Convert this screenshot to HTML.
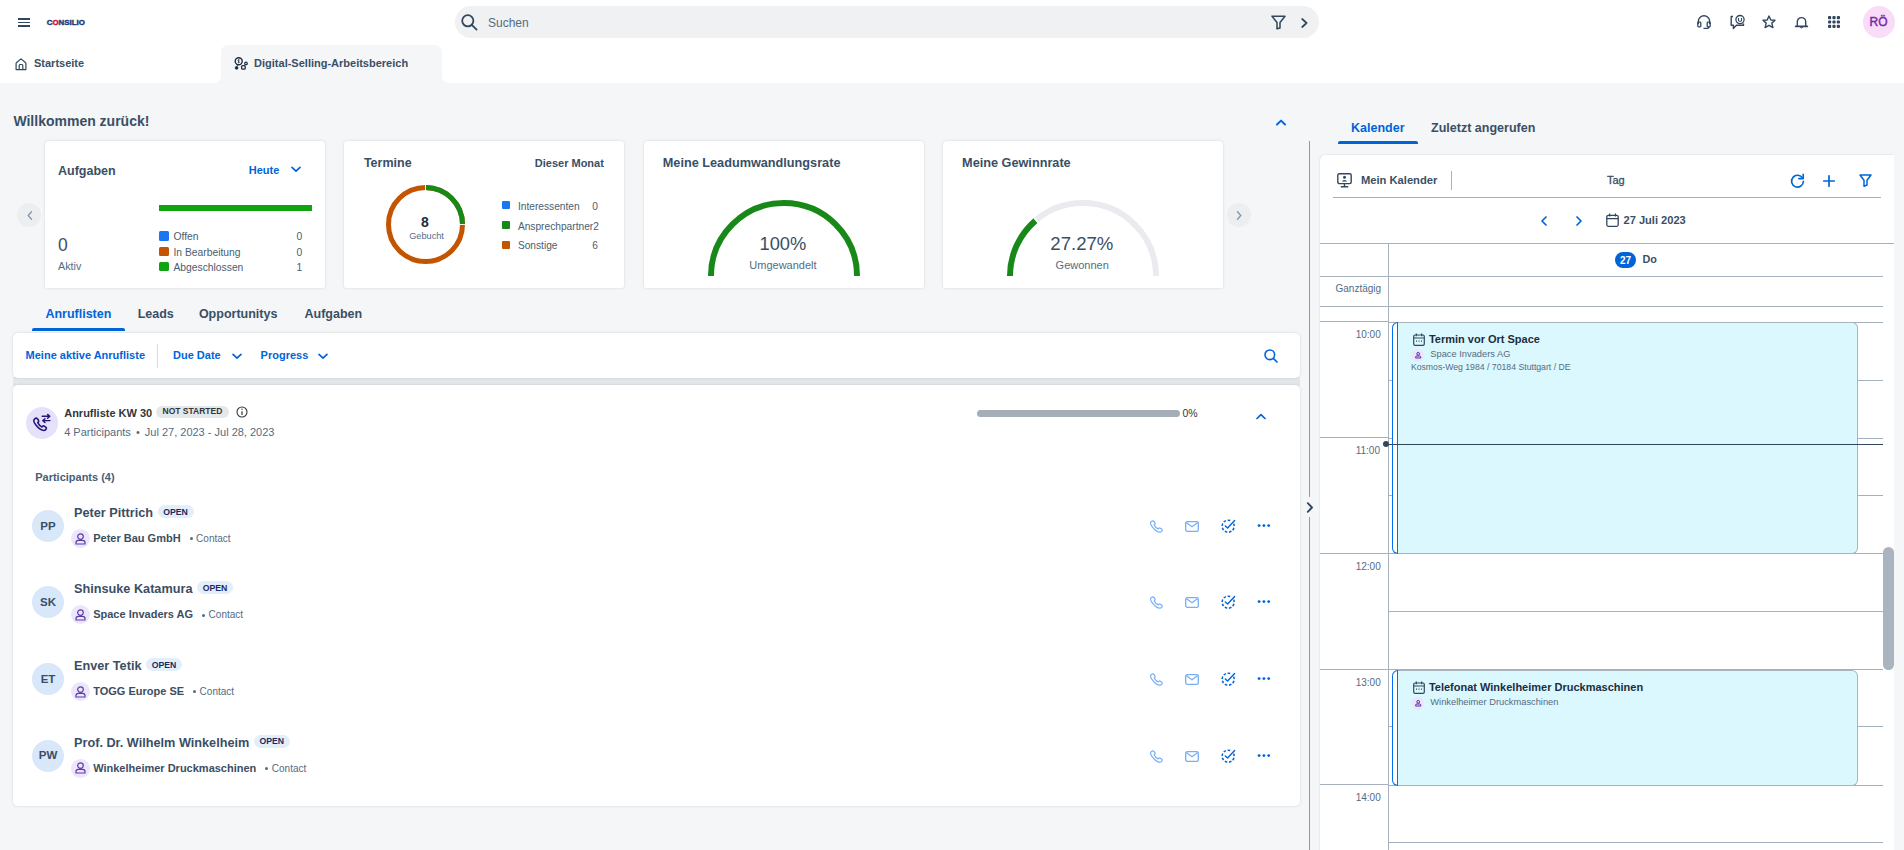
<!DOCTYPE html>
<html><head><meta charset="utf-8">
<style>
*{box-sizing:border-box;margin:0;padding:0}
html,body{width:1904px;height:850px;overflow:hidden;background:#f5f6f7;font-family:"Liberation Sans",sans-serif;color:#1d2d3e}
.a{position:absolute}
.t{position:absolute;line-height:1;white-space:nowrap}
.card{position:absolute;background:#fff;border-radius:4px 4px 2px 2px;box-shadow:0 0 3px rgba(34,53,72,.16)}
svg{position:absolute;overflow:visible}
</style></head><body>
<div class="a" style="left:0px;top:0px;width:1904px;height:83px;background:#fff;"></div>
<div class="a" style="left:18px;top:18px;width:12px;height:1.5px;background:#32475e;"></div>
<div class="a" style="left:18px;top:21.5px;width:12px;height:1.5px;background:#32475e;"></div>
<div class="a" style="left:18px;top:25px;width:12px;height:1.5px;background:#32475e;"></div>
<svg style="left:46px;top:18px" width="40" height="8" viewBox="0 0 40 8"><text x="0.8" y="6.8" font-family="Liberation Sans" font-weight="bold" font-size="7.6" textLength="38" lengthAdjust="spacingAndGlyphs" fill="#1f3d73" stroke="#1f3d73" stroke-width="0.45">C<tspan fill="#d0103a" stroke="#d0103a">O</tspan>NSILIO</text></svg>
<div class="a" style="left:455px;top:6px;width:864px;height:32px;background:#eff1f2;border-radius:16px"></div>
<svg style="left:461px;top:14px" width="17" height="17" viewBox="0 0 17 17"><circle cx="6.8" cy="6.8" r="5.6" fill="none" stroke="#32475e" stroke-width="1.8"/><path d="M10.8 10.8 L15.6 15.6" stroke="#32475e" stroke-width="1.8" stroke-linecap="round"/></svg>
<div class="t" style="left:488.0px;top:17px;font-size:12px;color:#556b82;">Suchen</div>
<svg style="left:1271px;top:15px" width="15" height="15" viewBox="0 0 15 15"><path d="M1 1.2 H14 L9 7.5 V13 L6 13.8 V7.5 Z" fill="none" stroke="#32475e" stroke-width="1.5" stroke-linejoin="round"/></svg>
<svg style="left:1301px;top:17.5px" width="7" height="10" viewBox="0 0 7 10"><path d="M1.2 1 L5.6 5 L1.2 9" fill="none" stroke="#32475e" stroke-width="1.7" stroke-linecap="round" stroke-linejoin="round"/></svg>
<svg style="left:1697px;top:15px" width="14" height="14" viewBox="0 0 14 14"><path d="M1.3 9 V6.5 A5.7 5.7 0 0 1 12.7 6.5 V9" fill="none" stroke="#32475e" stroke-width="1.4"/><rect x="0.8" y="7.2" width="3" height="4.6" rx="0.8" fill="none" stroke="#32475e" stroke-width="1.3"/><rect x="10.2" y="7.2" width="3" height="4.6" rx="0.8" fill="none" stroke="#32475e" stroke-width="1.3"/><path d="M12 11.5 Q12 13.4 9.5 13.4 H6.5" fill="none" stroke="#32475e" stroke-width="1.4"/></svg>
<svg style="left:1730px;top:14.5px" width="15" height="15" viewBox="0 0 15 15"><path d="M3 1.5 H1.2 V10.2 H3.5 L3.3 13.5 L6.5 10.2 H13.5 V8.6" fill="none" stroke="#32475e" stroke-width="1.4" stroke-linejoin="round"/><circle cx="10" cy="4.6" r="4.1" fill="none" stroke="#32475e" stroke-width="1.3"/><path d="M8.5 3 V5.2 Q8.5 6.3 10 6.3 Q11.5 6.3 11.5 5.2 V3" fill="none" stroke="#32475e" stroke-width="1.1"/></svg>
<svg style="left:1762px;top:15px" width="14" height="14" viewBox="0 0 14 14"><path d="M7 1 L8.8 5 L13 5.3 L9.8 8.1 L10.9 12.6 L7 10.3 L3.1 12.6 L4.2 8.1 L1 5.3 L5.2 5 Z" fill="none" stroke="#32475e" stroke-width="1.4" stroke-linejoin="round"/></svg>
<svg style="left:1795px;top:15.5px" width="13" height="13" viewBox="0 0 13 13"><path d="M2.3 10.3 V5.8 A4.2 4.2 0 0 1 10.7 5.8 V10.3" fill="none" stroke="#32475e" stroke-width="1.4"/><path d="M0.6 10.4 H12.4" stroke="#32475e" stroke-width="1.6" stroke-linecap="round"/><path d="M5.3 11.4 Q6.5 12.6 7.7 11.4" fill="#32475e" stroke="#32475e" stroke-width="1"/></svg>
<svg style="left:1828px;top:16px" width="12" height="12" viewBox="0 0 12 12"><g fill="#32475e"><rect x="0" y="0" width="3.2" height="3.2" rx="1"/><rect x="4.4" y="0" width="3.2" height="3.2" rx="1"/><rect x="8.8" y="0" width="3.2" height="3.2" rx="1"/><rect x="0" y="4.4" width="3.2" height="3.2" rx="1"/><rect x="4.4" y="4.4" width="3.2" height="3.2" rx="1"/><rect x="8.8" y="4.4" width="3.2" height="3.2" rx="1"/><rect x="0" y="8.8" width="3.2" height="3.2" rx="1"/><rect x="4.4" y="8.8" width="3.2" height="3.2" rx="1"/><rect x="8.8" y="8.8" width="3.2" height="3.2" rx="1"/></g></svg>
<div class="a" style="left:1863px;top:6px;width:32px;height:32px;background:#f8dcf8;border-radius:50%"></div>
<div class="t" style="left:1869.5px;top:16px;font-size:12px;color:#7a2aa8;-webkit-text-stroke:0.45px #7a2aa8;">RÖ</div>
<svg style="left:14.5px;top:57.5px" width="12" height="13" viewBox="0 0 12 13"><path d="M1.1 11.6 V5.5 Q1.1 4.9 1.6 4.5 L6 0.9 L10.4 4.5 Q10.9 4.9 10.9 5.5 V11.6 Z" fill="none" stroke="#32475e" stroke-width="1.2" stroke-linejoin="round"/><path d="M4.2 11.6 V7.4 Q4.2 6.5 5 6.5 H7 Q7.8 6.5 7.8 7.4 V11.6" fill="none" stroke="#32475e" stroke-width="1.2"/></svg>
<div class="t" style="left:34.0px;top:58px;font-size:11px;color:#3a4f65;font-weight:bold;">Startseite</div>
<div class="a" style="left:221px;top:45px;width:221px;height:38px;background:#f5f6f7;border-radius:7px 7px 0 0"></div>
<svg style="left:213px;top:75px" width="8" height="8" viewBox="0 0 8 8"><path d="M0 8 Q8 8 8 0 V8 Z" fill="#f5f6f7"/></svg>
<svg style="left:442px;top:75px" width="8" height="8" viewBox="0 0 8 8"><path d="M8 8 Q0 8 0 0 V8 Z" fill="#f5f6f7"/></svg>
<svg style="left:232px;top:55px" width="16" height="16" viewBox="0 0 16 16"><circle cx="6.7" cy="6.2" r="3.5" fill="none" stroke="#1d2d3e" stroke-width="1.4"/><path d="M6.7 4.3 V8.1 M7.6 5 Q6 4.4 6 5.6 Q6 6.3 7 6.5 Q7.6 6.8 7.2 7.6 Q6.6 8 5.8 7.6" fill="none" stroke="#1d2d3e" stroke-width="0.7"/><circle cx="4.6" cy="12.9" r="1.4" fill="#1d2d3e" stroke="#1d2d3e" stroke-width="0.8"/><path d="M4.9 11.5 L5.8 9.6" stroke="#1d2d3e" stroke-width="0.8"/><rect x="9.6" y="10.6" width="3.6" height="3.6" rx="1" fill="none" stroke="#1d2d3e" stroke-width="1.3"/><circle cx="14" cy="8.4" r="1.3" fill="none" stroke="#1d2d3e" stroke-width="1.2"/><path d="M12.6 10.6 L13.3 9.5" stroke="#1d2d3e" stroke-width="0.9"/></svg>
<div class="t" style="left:254.1px;top:58px;font-size:11px;color:#3a4f65;font-weight:bold;">Digital-Selling-Arbeitsbereich</div>
<div class="t" style="left:13.4px;top:114px;font-size:14px;color:#3a4f65;font-weight:bold;">Willkommen zurück!</div>
<svg style="left:1275.5px;top:118.5px" width="10" height="7" viewBox="0 0 10 7"><path d="M1 5.5 L5 1.6 L9 5.5" fill="none" stroke="#0064d9" stroke-width="1.9" stroke-linecap="round" stroke-linejoin="round"/></svg>
<div class="a" style="left:16.8px;top:202.7px;width:24px;height:24px;background:#eceef0;border-radius:50%"></div>
<svg style="left:26.5px;top:210.7px" width="6" height="9" viewBox="0 0 6 9"><path d="M4.5 0.8 L1.2 4.5 L4.5 8.2" fill="none" stroke="#8396a8" stroke-width="1.3" stroke-linecap="round"/></svg>
<div class="a" style="left:1226.8px;top:203px;width:24px;height:24px;background:#eceef0;border-radius:50%"></div>
<svg style="left:1236px;top:211px" width="6" height="9" viewBox="0 0 6 9"><path d="M1.5 0.8 L4.8 4.5 L1.5 8.2" fill="none" stroke="#8396a8" stroke-width="1.3" stroke-linecap="round"/></svg>
<div class="card" style="left:45px;top:141px;width:280px;height:146.5px"></div>
<div class="t" style="left:58.0px;top:165px;font-size:12.5px;color:#3a4f65;font-weight:bold;">Aufgaben</div>
<div class="t" style="left:248.7px;top:165px;font-size:11px;color:#0064d9;font-weight:bold;">Heute</div>
<svg style="left:290.5px;top:166px" width="10" height="7" viewBox="0 0 10 7"><path d="M1 1.3 L5 5.2 L9 1.3" fill="none" stroke="#0064d9" stroke-width="1.7" stroke-linecap="round" stroke-linejoin="round"/></svg>
<div class="a" style="left:159px;top:204.6px;width:153px;height:6.3px;background:#0fa30f;"></div>
<div class="a" style="left:159px;top:231.4px;width:10px;height:9.3px;background:#1b76f2;border-radius:1.5px"></div>
<div class="t" style="left:173.5px;top:232px;font-size:10.3px;color:#4a5d70;">Offen</div>
<div class="t" style="left:296.4px;top:232px;font-size:10.3px;color:#4a5d70;">0</div>
<div class="a" style="left:159px;top:246.7px;width:10px;height:9.3px;background:#c35500;border-radius:1.5px"></div>
<div class="t" style="left:173.5px;top:248px;font-size:10.3px;color:#4a5d70;">In Bearbeitung</div>
<div class="t" style="left:296.4px;top:248px;font-size:10.3px;color:#4a5d70;">0</div>
<div class="a" style="left:159px;top:262.0px;width:10px;height:9.3px;background:#0fa30f;border-radius:1.5px"></div>
<div class="t" style="left:173.5px;top:263px;font-size:10.3px;color:#4a5d70;">Abgeschlossen</div>
<div class="t" style="left:296.4px;top:263px;font-size:10.3px;color:#4a5d70;">1</div>
<div class="t" style="left:58.0px;top:237px;font-size:17.5px;color:#3a4f65;">0</div>
<div class="t" style="left:58.0px;top:261px;font-size:10.75px;color:#556b82;">Aktiv</div>
<div class="card" style="left:344px;top:141px;width:280px;height:146.5px"></div>
<div class="t" style="left:363.9px;top:157px;font-size:12.5px;color:#3a4f65;font-weight:bold;">Termine</div>
<div class="t" style="left:534.8px;top:158px;font-size:11px;color:#3a4f65;font-weight:bold;">Dieser Monat</div>
<svg style="left:386px;top:185px" width="79" height="79" viewBox="0 0 79 79"><circle cx="39.5" cy="39.5" r="37" fill="none" stroke="#c35500" stroke-width="5"/><path d="M39.5 2.5 A37 37 0 0 1 76.5 39.5" fill="none" stroke="#188918" stroke-width="5"/><path d="M39.5 0 V5 M74 39.5 H79" stroke="#fff" stroke-width="0.9"/></svg>
<div class="t" style="left:405px;top:215px;font-size:14px;color:#1d2d3e;font-weight:bold;width:40px;text-align:center;">8</div>
<div class="t" style="left:409.2px;top:232px;font-size:9.2px;color:#556b82;">Gebucht</div>
<div class="a" style="left:502px;top:201.4px;width:8px;height:7.6px;background:#1b76f2;border-radius:1px"></div>
<div class="t" style="left:517.9px;top:202px;font-size:10.2px;color:#4a5d70;">Interessenten</div>
<div class="t" style="left:592.3px;top:202px;font-size:10.2px;color:#4a5d70;">0</div>
<div class="a" style="left:502px;top:221.3px;width:8px;height:7.6px;background:#188918;border-radius:1px"></div>
<div class="t" style="left:517.9px;top:222px;font-size:10.2px;color:#4a5d70;">Ansprechpartner2</div>
<div class="a" style="left:502px;top:241.2px;width:8px;height:7.6px;background:#c35500;border-radius:1px"></div>
<div class="t" style="left:517.9px;top:241px;font-size:10.2px;color:#4a5d70;">Sonstige</div>
<div class="t" style="left:592.3px;top:241px;font-size:10.2px;color:#4a5d70;">6</div>
<div class="card" style="left:644px;top:141px;width:280px;height:146.5px"></div>
<div class="t" style="left:662.8px;top:157px;font-size:12.7px;color:#3a4f65;font-weight:bold;">Meine Leadumwandlungsrate</div>
<svg style="left:704px;top:196px" width="160" height="81" viewBox="0 0 160 81"><path d="M7 80 A73 73 0 0 1 153 80" fill="none" stroke="#188918" stroke-width="6"/></svg>
<div class="t" style="left:759.5px;top:235px;font-size:18.3px;color:#3a4f65;">100%</div>
<div class="t" style="left:749.3px;top:260px;font-size:11px;color:#556b82;">Umgewandelt</div>
<div class="card" style="left:943px;top:141px;width:280px;height:146.5px"></div>
<div class="t" style="left:962.1px;top:157px;font-size:12.7px;color:#3a4f65;font-weight:bold;">Meine Gewinnrate</div>
<svg style="left:1003px;top:196px" width="160" height="81" viewBox="0 0 160 81"><path d="M7 80 A73 73 0 0 1 153 80" fill="none" stroke="#e9ebee" stroke-width="6"/><path d="M7 80 A73 73 0 0 1 32.5 24.6" fill="none" stroke="#188918" stroke-width="6"/><path d="M35.6 27.1 L30.5 21.0" stroke="#fff" stroke-width="1.6"/></svg>
<div class="t" style="left:1050.3px;top:235px;font-size:18.6px;color:#3a4f65;">27.27%</div>
<div class="t" style="left:1055.6px;top:260px;font-size:11px;color:#556b82;">Gewonnen</div>
<div class="t" style="left:45.4px;top:308px;font-size:12.5px;color:#0064d9;font-weight:bold;">Anruflisten</div>
<div class="t" style="left:137.7px;top:308px;font-size:12.5px;color:#3a4f65;font-weight:bold;">Leads</div>
<div class="t" style="left:198.9px;top:308px;font-size:12.5px;color:#3a4f65;font-weight:bold;">Opportunitys</div>
<div class="t" style="left:304.5px;top:308px;font-size:12.5px;color:#3a4f65;font-weight:bold;">Aufgaben</div>
<div class="a" style="left:32px;top:327.5px;width:93px;height:3px;background:#0064d9;border-radius:2px 2px 0 0"></div>
<div class="a" style="left:13px;top:377px;width:1287px;height:9px;background:#e4e7ea;"></div>
<div class="card" style="left:13px;top:333px;width:1287px;height:45px;border-radius:5px"></div>
<div class="t" style="left:25.6px;top:350px;font-size:11px;color:#0064d9;font-weight:bold;">Meine aktive Anrufliste</div>
<div class="a" style="left:157px;top:344px;width:1px;height:24px;background:#d9dde2;"></div>
<div class="t" style="left:173.0px;top:350px;font-size:11px;color:#0064d9;font-weight:bold;">Due Date</div>
<svg style="left:231.5px;top:352.5px" width="10" height="7" viewBox="0 0 10 7"><path d="M1 1.3 L5 5.2 L9 1.3" fill="none" stroke="#0064d9" stroke-width="1.7" stroke-linecap="round" stroke-linejoin="round"/></svg>
<div class="t" style="left:260.6px;top:350px;font-size:11px;color:#0064d9;font-weight:bold;">Progress</div>
<svg style="left:317.5px;top:352.5px" width="10" height="7" viewBox="0 0 10 7"><path d="M1 1.3 L5 5.2 L9 1.3" fill="none" stroke="#0064d9" stroke-width="1.7" stroke-linecap="round" stroke-linejoin="round"/></svg>
<svg style="left:1264px;top:349px" width="14" height="14" viewBox="0 0 14 14"><circle cx="5.8" cy="5.8" r="4.8" fill="none" stroke="#0064d9" stroke-width="1.6"/><path d="M9.3 9.3 L13 13" stroke="#0064d9" stroke-width="1.7" stroke-linecap="round"/></svg>
<div class="card" style="left:13px;top:385px;width:1287px;height:421px;border-radius:5px"></div>
<div class="a" style="left:26px;top:407px;width:32px;height:32px;background:#e6e1fb;border-radius:50%"></div>
<svg style="left:32px;top:413px" width="20" height="20" viewBox="0 0 20 20"><g transform="translate(1.2 4.3) scale(1.08)"><path d="M3.2 0.9 C2.6 0.7 2.0 0.9 1.6 1.3 L1.0 1.9 C0.3 2.6 0.5 4.6 2.5 7.2 C4.5 9.8 7.5 12.2 9.9 12.2 C10.6 12.2 11.2 11.9 11.6 11.4 L12.0 10.9 C12.4 10.4 12.3 9.7 11.8 9.3 L10.3 8.2 C9.8 7.9 9.2 7.9 8.8 8.3 L8.2 8.9 C6.9 8.3 4.8 6.2 4.2 4.9 L4.8 4.3 C5.2 3.9 5.2 3.3 4.9 2.8 L3.9 1.4 Z" fill="none" stroke="#25167a" stroke-width="1.5" stroke-linejoin="round"/></g><path d="M10.2 3.3 H17.6 M15.6 1.4 L17.8 3.3 L15.6 5.2 M18 7.6 H11 M13 5.7 L10.8 7.6 L13 9.5" fill="none" stroke="#25167a" stroke-width="1.4" stroke-linecap="round" stroke-linejoin="round"/></svg>
<div class="t" style="left:64.2px;top:408px;font-size:11px;color:#32363a;font-weight:bold;">Anrufliste KW 30</div>
<div class="a" style="left:156.3px;top:406px;width:72.4px;height:12px;background:#e5e8eb;border-radius:6px"></div>
<div class="t" style="left:162.5px;top:407px;font-size:8.5px;color:#32363a;font-weight:bold;">NOT STARTED</div>
<svg style="left:235.5px;top:406px" width="12" height="12" viewBox="0 0 12 12"><circle cx="6" cy="6" r="5" fill="none" stroke="#32363a" stroke-width="1.1"/><path d="M6 5.2 V9" stroke="#32363a" stroke-width="1.2"/><circle cx="6" cy="3.3" r="0.7" fill="#32363a"/></svg>
<div class="t" style="left:64.2px;top:427px;font-size:11px;color:#556b82;">4 Participants <span style="margin:0 2px">•</span> Jul 27, 2023 - Jul 28, 2023</div>
<div class="a" style="left:977px;top:410px;width:203px;height:7px;background:#a5aeb7;border-radius:3.5px"></div>
<div class="t" style="left:1182.5px;top:408px;font-size:10.5px;color:#32363a;">0%</div>
<svg style="left:1256px;top:413px" width="10" height="7" viewBox="0 0 10 7"><path d="M1 5.5 L5 1.6 L9 5.5" fill="none" stroke="#0064d9" stroke-width="1.7" stroke-linecap="round" stroke-linejoin="round"/></svg>
<div class="t" style="left:35.2px;top:472px;font-size:11px;color:#475e75;font-weight:bold;">Participants (4)</div>
<div class="a" style="left:32px;top:509.7px;width:32px;height:32px;background:#d9e7fa;border-radius:50%"></div>
<div class="t" style="left:32px;top:521px;font-size:11.5px;color:#3b4e63;font-weight:bold;width:32px;text-align:center;">PP</div>
<div class="t" style="left:74.0px;top:507px;font-size:12.7px;color:#3b4e63;font-weight:bold;">Peter Pittrich</div>
<div class="a" style="left:157.5px;top:505.0px;width:36px;height:12.7px;background:#e3eefb;border-radius:6.5px"></div>
<div class="t" style="left:157.5px;top:508px;font-size:8.7px;color:#1b2a5c;font-weight:bold;width:36px;text-align:center;">OPEN</div>
<div class="a" style="left:71px;top:529.0px;width:19px;height:19px;background:#ece5fb;border-radius:50%"></div>
<svg style="left:75px;top:532.5px" width="11" height="12" viewBox="0 0 11 12"><circle cx="5.5" cy="3.6" r="2.8" fill="none" stroke="#5b3aa8" stroke-width="1.2"/><path d="M1 11 V9.6 Q1 7.4 3.4 7.4 H7.6 Q10 7.4 10 9.6 V11 Z" fill="none" stroke="#5b3aa8" stroke-width="1.2" stroke-linejoin="round"/></svg>
<div class="t" style="left:93.2px;top:533px;font-size:11px;color:#3b4e63;font-weight:bold;">Peter Bau GmbH</div>
<div class="a" style="left:189.6px;top:537.3px;width:3px;height:3px;background:#556b82;border-radius:50%"></div>
<div class="t" style="left:196.1px;top:534px;font-size:10px;color:#556b82;">Contact</div>
<svg style="left:1149.5px;top:519.7px" width="13" height="13" viewBox="0 0 13 13"><path d="M3.2 0.9 C2.6 0.7 2.0 0.9 1.6 1.3 L1.0 1.9 C0.3 2.6 0.5 4.6 2.5 7.2 C4.5 9.8 7.5 12.2 9.9 12.2 C10.6 12.2 11.2 11.9 11.6 11.4 L12.0 10.9 C12.4 10.4 12.3 9.7 11.8 9.3 L10.3 8.2 C9.8 7.9 9.2 7.9 8.8 8.3 L8.2 8.9 C6.9 8.3 4.8 6.2 4.2 4.9 L4.8 4.3 C5.2 3.9 5.2 3.3 4.9 2.8 L3.9 1.4 Z" fill="none" stroke="#78aef5" stroke-width="1.2" stroke-linejoin="round"/></svg>
<svg style="left:1185px;top:520.9px" width="14" height="11" viewBox="0 0 14 11"><rect x="0.7" y="0.7" width="12.6" height="9.6" rx="1.6" fill="none" stroke="#78aef5" stroke-width="1.3"/><path d="M1.2 1.5 L7 5.8 L12.8 1.5" fill="none" stroke="#78aef5" stroke-width="1.2"/></svg>
<svg style="left:1220.5px;top:519.1px" width="15" height="14" viewBox="0 0 15 14"><path d="M12.6 4.6 A6 6 0 1 1 10.2 2.0" fill="none" stroke="#0064d9" stroke-width="1.5" stroke-dasharray="2.6 1.7"/><path d="M4.3 6.9 L6.6 9.0 L13.6 1.6" fill="none" stroke="#0064d9" stroke-width="1.4" stroke-linecap="round" stroke-linejoin="round"/></svg>
<svg style="left:1256px;top:523.2px" width="16" height="5" viewBox="0 0 16 5"><g fill="#0064d9"><circle cx="3.1" cy="2.6" r="1.45"/><circle cx="7.9" cy="2.6" r="1.45"/><circle cx="12.7" cy="2.6" r="1.45"/></g></svg>
<div class="a" style="left:32px;top:585.9px;width:32px;height:32px;background:#d9e7fa;border-radius:50%"></div>
<div class="t" style="left:32px;top:597px;font-size:11.5px;color:#3b4e63;font-weight:bold;width:32px;text-align:center;">SK</div>
<div class="t" style="left:74.0px;top:583px;font-size:12.7px;color:#3b4e63;font-weight:bold;">Shinsuke Katamura</div>
<div class="a" style="left:197.0px;top:581.2px;width:36px;height:12.7px;background:#e3eefb;border-radius:6.5px"></div>
<div class="t" style="left:197.0px;top:584px;font-size:8.7px;color:#1b2a5c;font-weight:bold;width:36px;text-align:center;">OPEN</div>
<div class="a" style="left:71px;top:605.2px;width:19px;height:19px;background:#ece5fb;border-radius:50%"></div>
<svg style="left:75px;top:608.7px" width="11" height="12" viewBox="0 0 11 12"><circle cx="5.5" cy="3.6" r="2.8" fill="none" stroke="#5b3aa8" stroke-width="1.2"/><path d="M1 11 V9.6 Q1 7.4 3.4 7.4 H7.6 Q10 7.4 10 9.6 V11 Z" fill="none" stroke="#5b3aa8" stroke-width="1.2" stroke-linejoin="round"/></svg>
<div class="t" style="left:93.2px;top:609px;font-size:11px;color:#3b4e63;font-weight:bold;">Space Invaders AG</div>
<div class="a" style="left:202.1px;top:613.5px;width:3px;height:3px;background:#556b82;border-radius:50%"></div>
<div class="t" style="left:208.6px;top:610px;font-size:10px;color:#556b82;">Contact</div>
<svg style="left:1149.5px;top:595.9px" width="13" height="13" viewBox="0 0 13 13"><path d="M3.2 0.9 C2.6 0.7 2.0 0.9 1.6 1.3 L1.0 1.9 C0.3 2.6 0.5 4.6 2.5 7.2 C4.5 9.8 7.5 12.2 9.9 12.2 C10.6 12.2 11.2 11.9 11.6 11.4 L12.0 10.9 C12.4 10.4 12.3 9.7 11.8 9.3 L10.3 8.2 C9.8 7.9 9.2 7.9 8.8 8.3 L8.2 8.9 C6.9 8.3 4.8 6.2 4.2 4.9 L4.8 4.3 C5.2 3.9 5.2 3.3 4.9 2.8 L3.9 1.4 Z" fill="none" stroke="#78aef5" stroke-width="1.2" stroke-linejoin="round"/></svg>
<svg style="left:1185px;top:597.1px" width="14" height="11" viewBox="0 0 14 11"><rect x="0.7" y="0.7" width="12.6" height="9.6" rx="1.6" fill="none" stroke="#78aef5" stroke-width="1.3"/><path d="M1.2 1.5 L7 5.8 L12.8 1.5" fill="none" stroke="#78aef5" stroke-width="1.2"/></svg>
<svg style="left:1220.5px;top:595.3px" width="15" height="14" viewBox="0 0 15 14"><path d="M12.6 4.6 A6 6 0 1 1 10.2 2.0" fill="none" stroke="#0064d9" stroke-width="1.5" stroke-dasharray="2.6 1.7"/><path d="M4.3 6.9 L6.6 9.0 L13.6 1.6" fill="none" stroke="#0064d9" stroke-width="1.4" stroke-linecap="round" stroke-linejoin="round"/></svg>
<svg style="left:1256px;top:599.4px" width="16" height="5" viewBox="0 0 16 5"><g fill="#0064d9"><circle cx="3.1" cy="2.6" r="1.45"/><circle cx="7.9" cy="2.6" r="1.45"/><circle cx="12.7" cy="2.6" r="1.45"/></g></svg>
<div class="a" style="left:32px;top:662.8px;width:32px;height:32px;background:#d9e7fa;border-radius:50%"></div>
<div class="t" style="left:32px;top:674px;font-size:11.5px;color:#3b4e63;font-weight:bold;width:32px;text-align:center;">ET</div>
<div class="t" style="left:74.0px;top:660px;font-size:12.7px;color:#3b4e63;font-weight:bold;">Enver Tetik</div>
<div class="a" style="left:146.0px;top:658.1px;width:36px;height:12.7px;background:#e3eefb;border-radius:6.5px"></div>
<div class="t" style="left:146.0px;top:661px;font-size:8.7px;color:#1b2a5c;font-weight:bold;width:36px;text-align:center;">OPEN</div>
<div class="a" style="left:71px;top:682.1px;width:19px;height:19px;background:#ece5fb;border-radius:50%"></div>
<svg style="left:75px;top:685.6px" width="11" height="12" viewBox="0 0 11 12"><circle cx="5.5" cy="3.6" r="2.8" fill="none" stroke="#5b3aa8" stroke-width="1.2"/><path d="M1 11 V9.6 Q1 7.4 3.4 7.4 H7.6 Q10 7.4 10 9.6 V11 Z" fill="none" stroke="#5b3aa8" stroke-width="1.2" stroke-linejoin="round"/></svg>
<div class="t" style="left:93.2px;top:686px;font-size:11px;color:#3b4e63;font-weight:bold;">TOGG Europe SE</div>
<div class="a" style="left:193.1px;top:690.4px;width:3px;height:3px;background:#556b82;border-radius:50%"></div>
<div class="t" style="left:199.6px;top:687px;font-size:10px;color:#556b82;">Contact</div>
<svg style="left:1149.5px;top:672.8px" width="13" height="13" viewBox="0 0 13 13"><path d="M3.2 0.9 C2.6 0.7 2.0 0.9 1.6 1.3 L1.0 1.9 C0.3 2.6 0.5 4.6 2.5 7.2 C4.5 9.8 7.5 12.2 9.9 12.2 C10.6 12.2 11.2 11.9 11.6 11.4 L12.0 10.9 C12.4 10.4 12.3 9.7 11.8 9.3 L10.3 8.2 C9.8 7.9 9.2 7.9 8.8 8.3 L8.2 8.9 C6.9 8.3 4.8 6.2 4.2 4.9 L4.8 4.3 C5.2 3.9 5.2 3.3 4.9 2.8 L3.9 1.4 Z" fill="none" stroke="#78aef5" stroke-width="1.2" stroke-linejoin="round"/></svg>
<svg style="left:1185px;top:674.0px" width="14" height="11" viewBox="0 0 14 11"><rect x="0.7" y="0.7" width="12.6" height="9.6" rx="1.6" fill="none" stroke="#78aef5" stroke-width="1.3"/><path d="M1.2 1.5 L7 5.8 L12.8 1.5" fill="none" stroke="#78aef5" stroke-width="1.2"/></svg>
<svg style="left:1220.5px;top:672.2px" width="15" height="14" viewBox="0 0 15 14"><path d="M12.6 4.6 A6 6 0 1 1 10.2 2.0" fill="none" stroke="#0064d9" stroke-width="1.5" stroke-dasharray="2.6 1.7"/><path d="M4.3 6.9 L6.6 9.0 L13.6 1.6" fill="none" stroke="#0064d9" stroke-width="1.4" stroke-linecap="round" stroke-linejoin="round"/></svg>
<svg style="left:1256px;top:676.3px" width="16" height="5" viewBox="0 0 16 5"><g fill="#0064d9"><circle cx="3.1" cy="2.6" r="1.45"/><circle cx="7.9" cy="2.6" r="1.45"/><circle cx="12.7" cy="2.6" r="1.45"/></g></svg>
<div class="a" style="left:32px;top:739.6px;width:32px;height:32px;background:#d9e7fa;border-radius:50%"></div>
<div class="t" style="left:32px;top:750px;font-size:11.5px;color:#3b4e63;font-weight:bold;width:32px;text-align:center;">PW</div>
<div class="t" style="left:74.0px;top:737px;font-size:12.7px;color:#3b4e63;font-weight:bold;">Prof. Dr. Wilhelm Winkelheim</div>
<div class="a" style="left:253.8px;top:734.9px;width:36px;height:12.7px;background:#e3eefb;border-radius:6.5px"></div>
<div class="t" style="left:253.8px;top:737px;font-size:8.7px;color:#1b2a5c;font-weight:bold;width:36px;text-align:center;">OPEN</div>
<div class="a" style="left:71px;top:758.9px;width:19px;height:19px;background:#ece5fb;border-radius:50%"></div>
<svg style="left:75px;top:762.4px" width="11" height="12" viewBox="0 0 11 12"><circle cx="5.5" cy="3.6" r="2.8" fill="none" stroke="#5b3aa8" stroke-width="1.2"/><path d="M1 11 V9.6 Q1 7.4 3.4 7.4 H7.6 Q10 7.4 10 9.6 V11 Z" fill="none" stroke="#5b3aa8" stroke-width="1.2" stroke-linejoin="round"/></svg>
<div class="t" style="left:93.2px;top:763px;font-size:11px;color:#3b4e63;font-weight:bold;">Winkelheimer Druckmaschinen</div>
<div class="a" style="left:265.3px;top:767.2px;width:3px;height:3px;background:#556b82;border-radius:50%"></div>
<div class="t" style="left:271.8px;top:764px;font-size:10px;color:#556b82;">Contact</div>
<svg style="left:1149.5px;top:749.6px" width="13" height="13" viewBox="0 0 13 13"><path d="M3.2 0.9 C2.6 0.7 2.0 0.9 1.6 1.3 L1.0 1.9 C0.3 2.6 0.5 4.6 2.5 7.2 C4.5 9.8 7.5 12.2 9.9 12.2 C10.6 12.2 11.2 11.9 11.6 11.4 L12.0 10.9 C12.4 10.4 12.3 9.7 11.8 9.3 L10.3 8.2 C9.8 7.9 9.2 7.9 8.8 8.3 L8.2 8.9 C6.9 8.3 4.8 6.2 4.2 4.9 L4.8 4.3 C5.2 3.9 5.2 3.3 4.9 2.8 L3.9 1.4 Z" fill="none" stroke="#78aef5" stroke-width="1.2" stroke-linejoin="round"/></svg>
<svg style="left:1185px;top:750.8px" width="14" height="11" viewBox="0 0 14 11"><rect x="0.7" y="0.7" width="12.6" height="9.6" rx="1.6" fill="none" stroke="#78aef5" stroke-width="1.3"/><path d="M1.2 1.5 L7 5.8 L12.8 1.5" fill="none" stroke="#78aef5" stroke-width="1.2"/></svg>
<svg style="left:1220.5px;top:749.0px" width="15" height="14" viewBox="0 0 15 14"><path d="M12.6 4.6 A6 6 0 1 1 10.2 2.0" fill="none" stroke="#0064d9" stroke-width="1.5" stroke-dasharray="2.6 1.7"/><path d="M4.3 6.9 L6.6 9.0 L13.6 1.6" fill="none" stroke="#0064d9" stroke-width="1.4" stroke-linecap="round" stroke-linejoin="round"/></svg>
<svg style="left:1256px;top:753.1px" width="16" height="5" viewBox="0 0 16 5"><g fill="#0064d9"><circle cx="3.1" cy="2.6" r="1.45"/><circle cx="7.9" cy="2.6" r="1.45"/><circle cx="12.7" cy="2.6" r="1.45"/></g></svg>
<div class="a" style="left:1309px;top:141px;width:1px;height:355.5px;background:#8d99a6;"></div>
<div class="a" style="left:1309px;top:517px;width:1px;height:333px;background:#8d99a6;"></div>
<svg style="left:1305.5px;top:501.5px" width="8" height="11" viewBox="0 0 8 11"><path d="M1.8 1.2 L6 5.5 L1.8 9.8" fill="none" stroke="#32475e" stroke-width="1.9" stroke-linecap="round" stroke-linejoin="round"/></svg>
<div class="t" style="left:1351.0px;top:122px;font-size:12.5px;color:#0064d9;font-weight:bold;">Kalender</div>
<div class="t" style="left:1431.1px;top:122px;font-size:12.5px;color:#3a4f65;font-weight:bold;">Zuletzt angerufen</div>
<div class="a" style="left:1338px;top:141px;width:80px;height:3px;background:#0064d9;border-radius:2px 2px 0 0"></div>
<div class="a" style="left:1320px;top:155px;width:574px;height:720px;background:#fff;border-radius:5px 0 0 0;box-shadow:0 0 1.5px rgba(34,53,72,.28)"></div>
<svg style="left:1336.5px;top:172.5px" width="15" height="15" viewBox="0 0 15 15"><rect x="0.8" y="0.8" width="13.4" height="9.8" rx="1.5" fill="none" stroke="#32475e" stroke-width="1.4"/><circle cx="7.5" cy="4.3" r="1.5" fill="#32475e"/><path d="M4.8 8.4 Q7.5 5.8 10.2 8.4 Z" fill="#32475e"/><path d="M7.5 10.6 V13.5 M3.8 13.8 H11.2" stroke="#32475e" stroke-width="1.4"/></svg>
<div class="t" style="left:1360.9px;top:175px;font-size:11.2px;color:#3a4f65;font-weight:bold;">Mein Kalender</div>
<div class="a" style="left:1451px;top:171px;width:1px;height:19px;background:#a7b0bd;"></div>
<div class="t" style="left:1606.9px;top:175px;font-size:11px;color:#3a4f65;-webkit-text-stroke:0.3px #3a4f65;">Tag</div>
<svg style="left:1789.5px;top:172.5px" width="15" height="15" viewBox="0 0 15 15"><path d="M12.6 5.2 A5.9 5.9 0 1 0 13.4 8.2" fill="none" stroke="#0064d9" stroke-width="1.6" stroke-linecap="round"/><path d="M13.2 1.2 V5.6 H8.8" fill="none" stroke="#0064d9" stroke-width="1.6" stroke-linecap="round" stroke-linejoin="round"/></svg>
<svg style="left:1823px;top:174.5px" width="12" height="12" viewBox="0 0 12 12"><path d="M6 0.8 V11.2 M0.8 6 H11.2" stroke="#0064d9" stroke-width="1.7" stroke-linecap="round"/></svg>
<svg style="left:1858.5px;top:173.5px" width="13" height="13" viewBox="0 0 13 13"><path d="M1 1 H12 L8 6.3 V11 L5 12.2 V6.3 Z" fill="none" stroke="#0064d9" stroke-width="1.5" stroke-linejoin="round"/></svg>
<div class="a" style="left:1333px;top:197px;width:548px;height:1px;background:#a7b0bd;"></div>
<svg style="left:1539.5px;top:215.5px" width="8" height="10" viewBox="0 0 8 10"><path d="M6 1 L2 5 L6 9" fill="none" stroke="#0064d9" stroke-width="1.7" stroke-linecap="round" stroke-linejoin="round"/></svg>
<svg style="left:1575px;top:215.5px" width="8" height="10" viewBox="0 0 8 10"><path d="M2 1 L6 5 L2 9" fill="none" stroke="#0064d9" stroke-width="1.7" stroke-linecap="round" stroke-linejoin="round"/></svg>
<svg style="left:1605.5px;top:213px" width="13" height="14" viewBox="0 0 13 14"><rect x="0.8" y="2.3" width="11.4" height="11" rx="1.5" fill="none" stroke="#32475e" stroke-width="1.3"/><path d="M0.8 5.6 H12.2 M3.6 0.6 V3.6 M9.4 0.6 V3.6" stroke="#32475e" stroke-width="1.3"/></svg>
<div class="t" style="left:1623.5px;top:215px;font-size:11.1px;color:#3a4f65;font-weight:bold;">27 Juli 2023</div>
<div class="a" style="left:1320px;top:243px;width:574px;height:1px;background:#a7b0bd;"></div>
<div class="a" style="left:1388px;top:243px;width:1px;height:607px;background:#a7b0bd;"></div>
<div class="a" style="left:1615px;top:252px;width:21px;height:16px;background:#0064d9;border-radius:8px"></div>
<div class="t" style="left:1615px;top:256px;font-size:10px;color:#fff;font-weight:bold;width:21px;text-align:center;">27</div>
<div class="t" style="left:1642.5px;top:254px;font-size:10.8px;color:#3a4f65;font-weight:bold;">Do</div>
<div class="a" style="left:1320px;top:276px;width:563px;height:1px;background:#a7b0bd;"></div>
<div class="a" style="left:1320px;top:306px;width:563px;height:1px;background:#a7b0bd;"></div>
<div class="t" style="left:1335.5px;top:284px;font-size:10px;color:#556b82;">Ganztägig</div>
<div class="a" style="left:1320px;top:321px;width:68px;height:1px;background:#a7b0bd;"></div>
<div class="t" style="left:1355.7px;top:330px;font-size:10px;color:#556b82;">10:00</div>
<div class="a" style="left:1320px;top:437px;width:68px;height:1px;background:#a7b0bd;"></div>
<div class="t" style="left:1355.7px;top:446px;font-size:10px;color:#556b82;">11:00</div>
<div class="a" style="left:1320px;top:553px;width:68px;height:1px;background:#a7b0bd;"></div>
<div class="t" style="left:1355.7px;top:562px;font-size:10px;color:#556b82;">12:00</div>
<div class="a" style="left:1320px;top:669px;width:68px;height:1px;background:#a7b0bd;"></div>
<div class="t" style="left:1355.7px;top:678px;font-size:10px;color:#556b82;">13:00</div>
<div class="a" style="left:1320px;top:784px;width:68px;height:1px;background:#a7b0bd;"></div>
<div class="t" style="left:1355.7px;top:793px;font-size:10px;color:#556b82;">14:00</div>
<div class="a" style="left:1389px;top:322px;width:494px;height:1px;background:#a7b0bd;"></div>
<div class="a" style="left:1389px;top:380px;width:494px;height:1px;background:#a7b0bd;"></div>
<div class="a" style="left:1389px;top:438px;width:494px;height:1px;background:#a7b0bd;"></div>
<div class="a" style="left:1389px;top:495px;width:494px;height:1px;background:#a7b0bd;"></div>
<div class="a" style="left:1389px;top:553px;width:494px;height:1px;background:#a7b0bd;"></div>
<div class="a" style="left:1389px;top:611px;width:494px;height:1px;background:#a7b0bd;"></div>
<div class="a" style="left:1389px;top:669px;width:494px;height:1px;background:#a7b0bd;"></div>
<div class="a" style="left:1389px;top:726px;width:494px;height:1px;background:#a7b0bd;"></div>
<div class="a" style="left:1389px;top:785px;width:494px;height:1px;background:#a7b0bd;"></div>
<div class="a" style="left:1389px;top:842px;width:494px;height:1px;background:#a7b0bd;"></div>
<div class="a" style="left:1392px;top:322px;width:466px;height:232px;background:#dbf8fe;border:1px solid #a9b4be;border-left:none;border-radius:6px"></div>
<div class="a" style="left:1392px;top:322px;width:6px;height:232px;background:#fff;border:1.5px solid #0070f2;border-right-width:1px;border-radius:6px 0 0 6px"></div>
<svg style="left:1412.5px;top:333px" width="12" height="13" viewBox="0 0 12 13"><rect x="0.7" y="2" width="10.6" height="10.3" rx="1.4" fill="none" stroke="#32475e" stroke-width="1.2"/><path d="M0.7 5 H11.3 M3.3 0.5 V3.3 M8.7 0.5 V3.3" stroke="#32475e" stroke-width="1.2"/><path d="M3 8.2 H4 M5.5 8.2 H6.5 M8 8.2 H9" stroke="#32475e" stroke-width="1.2"/></svg>
<div class="t" style="left:1428.9px;top:334px;font-size:11px;color:#1d2d3e;font-weight:bold;">Termin vor Ort Space</div>
<div class="a" style="left:1411px;top:349px;width:13px;height:13px;background:#ece5fb;border-radius:50%"></div>
<svg style="left:1415px;top:351.8px" width="6.4" height="6.4" viewBox="0 0 6.4 6.4"><circle cx="3.2" cy="1.8" r="1.35" fill="none" stroke="#4b2b9a" stroke-width="1"/><path d="M0.6 6 V5.2 Q0.6 4 1.9 4 H4.5 Q5.8 4 5.8 5.2 V6 Z" fill="none" stroke="#4b2b9a" stroke-width="1" stroke-linejoin="round"/></svg>
<div class="t" style="left:1430.3px;top:350px;font-size:9.3px;color:#556b82;">Space Invaders AG</div>
<div class="t" style="left:1410.9px;top:363px;font-size:8.7px;color:#556b82;">Kosmos-Weg 1984 / 70184 Stuttgart / DE</div>
<div class="a" style="left:1392px;top:670px;width:466px;height:116px;background:#dbf8fe;border:1px solid #a9b4be;border-left:none;border-radius:6px"></div>
<div class="a" style="left:1392px;top:670px;width:6px;height:116px;background:#fff;border:1.5px solid #0070f2;border-right-width:1px;border-radius:6px 0 0 6px"></div>
<svg style="left:1412.5px;top:681px" width="12" height="13" viewBox="0 0 12 13"><rect x="0.7" y="2" width="10.6" height="10.3" rx="1.4" fill="none" stroke="#32475e" stroke-width="1.2"/><path d="M0.7 5 H11.3 M3.3 0.5 V3.3 M8.7 0.5 V3.3" stroke="#32475e" stroke-width="1.2"/><path d="M3 8.2 H4 M5.5 8.2 H6.5 M8 8.2 H9" stroke="#32475e" stroke-width="1.2"/></svg>
<div class="t" style="left:1428.9px;top:682px;font-size:11px;color:#1d2d3e;font-weight:bold;">Telefonat Winkelheimer Druckmaschinen</div>
<div class="a" style="left:1411px;top:697px;width:13px;height:13px;background:#ece5fb;border-radius:50%"></div>
<svg style="left:1415px;top:699.8px" width="6.4" height="6.4" viewBox="0 0 6.4 6.4"><circle cx="3.2" cy="1.8" r="1.35" fill="none" stroke="#4b2b9a" stroke-width="1"/><path d="M0.6 6 V5.2 Q0.6 4 1.9 4 H4.5 Q5.8 4 5.8 5.2 V6 Z" fill="none" stroke="#4b2b9a" stroke-width="1" stroke-linejoin="round"/></svg>
<div class="t" style="left:1430.3px;top:698px;font-size:9.3px;color:#556b82;">Winkelheimer Druckmaschinen</div>
<div class="a" style="left:1386px;top:443.5px;width:497px;height:1.2px;background:#32475e;"></div>
<div class="a" style="left:1382.5px;top:440.6px;width:6.4px;height:6.4px;background:#32475e;border-radius:50%"></div>
<div class="a" style="left:1883px;top:547px;width:11px;height:123px;background:#a9b4be;border-radius:5.5px"></div>
<div class="a" style="left:1894px;top:141px;width:10px;height:709px;background:#f5f6f7;"></div>
</body></html>
